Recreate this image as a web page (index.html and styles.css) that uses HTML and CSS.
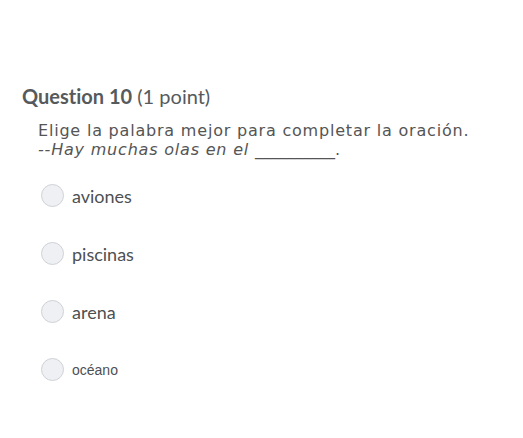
FILE: index.html
```html
<!DOCTYPE html>
<html>
<head>
<meta charset="utf-8">
<link rel="stylesheet" href="styles.css">
</head>
<body>
<div class="question">
  <h2 class="title"><strong>Question 10</strong> <span class="points">(1 point)</span></h2>
  <div class="prompt">
    <div>Elige la palabra mejor para completar la oración.</div>
    <div><em>--Hay muchas olas en el</em> <span class="blank">__________</span>.</div>
  </div>
  <ul class="options">
    <li class="option"><span class="radio"></span><span class="label">aviones</span></li>
    <li class="option"><span class="radio"></span><span class="label">piscinas</span></li>
    <li class="option"><span class="radio"></span><span class="label">arena</span></li>
    <li class="option"><span class="radio"></span><span class="label small">océano</span></li>
  </ul>
</div>
</body>
</html>
```
FILE: styles.css
```css
html, body {
  margin: 0;
  padding: 0;
  background: #ffffff;
}
.question {
  padding: 84px 0 0 22px;
  font-family: Lato, "Noto Sans", sans-serif;
  color: #565a5c;
  font-variant-ligatures: none;
}
.title {
  margin: 0;
  font-size: 20px;
  line-height: 24px;
  font-weight: 400;
}
.title strong {
  font-weight: 700;
}
.prompt {
  margin: 13px 0 0 16px;
  font-family: "DejaVu Sans", sans-serif;
  font-size: 16px;
  line-height: 19px;
  letter-spacing: 0.8px;
  color: #555555;
}
.blank {
  letter-spacing: 0;
}
.options {
  list-style: none;
  margin: 25px 0 0 19px;
  padding: 0;
  display: flex;
  flex-direction: column;
  gap: 35px;
}
.option {
  display: flex;
  align-items: center;
  gap: 8px;
  height: 23px;
}
.radio {
  width: 21px;
  height: 21px;
  border: 1px solid #cfd2d6;
  border-radius: 50%;
  background: #eef0f3;
  flex: none;
}
.label {
  font-size: 18px;
  color: #4d5052;
}
.label.small {
  font-family: "Liberation Sans", Arial, sans-serif;
  font-size: 14px;
}
```
